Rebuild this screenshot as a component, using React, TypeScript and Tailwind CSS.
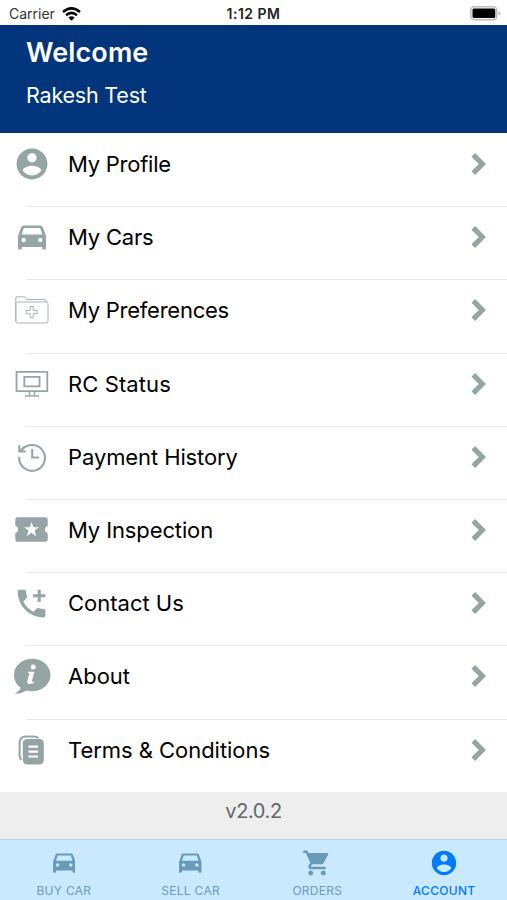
import type { ReactNode } from 'react';
import { IoMdContact } from 'react-icons/io';
import { MdAddIcCall, MdShoppingCart } from 'react-icons/md';

function CarIcon({ width, height }: { width: number; height: number }) {
  return (
    <svg width={width} height={height} viewBox="0 0 28 25" fill="currentColor">
      <path
        fillRule="evenodd"
        d="M5.500.5H22.500Q24.300.5 24.900 2.200L28 11V23.500Q28 24.600 27 24.600H25.400Q24.300 24.600 24.300 23.500V22H3.700V23.500Q3.700 24.600 2.600 24.600H1Q0 24.600 0 23.500V11L3.100 2.200Q3.700.5 5.500.5ZM5.800 3L3.700 9.600H24.300L22.200 3ZM5.700 12.800a2.200 2.200 0 1 0 0 4.400a2.200 2.200 0 0 0 0-4.400ZM22.300 12.800a2.200 2.200 0 1 0 0 4.400a2.200 2.200 0 0 0 0-4.400Z"
      />
    </svg>
  );
}

function HistoryIcon() {
  return (
    <svg width="30" height="30" viewBox="0 0 30 30" fill="none" stroke="#95a5a6" strokeWidth="2">
      <path d="M4.500 8.500A12.900 12.900 0 1 1 2.200 14.800" />
      <path d="M2.300 3.200V9.500H8.800" />
      <path d="M2.600 9.200L7.500 4.800" />
      <path d="M15.200 7V15.600H22" />
    </svg>
  );
}

function TicketIcon() {
  return (
    <svg width="33" height="25" viewBox="0 0 33 25">
      <path
        d="M2.500.3H30.500Q32.700.3 32.700 2.500V9A3.600 3.600 0 0 0 32.700 16V22.500Q32.700 24.700 30.500 24.700H2.500Q.3 24.700.3 22.500V16A3.600 3.600 0 0 0 .3 9V2.500Q.3.3 2.500.3Z"
        fill="#95a5a6"
      />
      <path d="M16.500 5l1.900 5.200h5.600l-4.500 3.400 1.700 5.600-4.700-3.400-4.700 3.400 1.700-5.600-4.500-3.400h5.600z" fill="#fff" />
    </svg>
  );
}

function FolderIcon() {
  return (
    <svg width="34" height="28" viewBox="0 0 34 28" fill="none" stroke="#a9b3b2" strokeWidth="1">
      <path d="M.8 25V2Q.8.8 2 .8H9Q10 .8 10.600 2L11.500 3.500H29Q31 3.500 31 6" />
      <path d="M.8 7Q1 6 2.500 6H31.500Q33 6 33 7.800V25Q33 27 31 27H2.500Q.8 27 .8 25Z" />
      <path d="M15.200 10.500h3v4h4v3.200h-4v4h-3v-4h-4v-3.200h4z" strokeLinejoin="round" />
    </svg>
  );
}

function MonitorIcon() {
  return (
    <svg width="34" height="28" viewBox="0 0 34 28" fill="none" stroke="#95a5a6" strokeWidth="1.800">
      <path d="M1.500 1.900H32.300V21.200H1.500Z" />
      <path d="M9.300 6.800H24.500V16.400H9.300Z" />
      <path d="M14.500 22v3.500M19.500 22v3.500M10 26h14" strokeWidth="1.400" />
    </svg>
  );
}

function InfoBubbleIcon() {
  return (
    <svg width="38" height="36" viewBox="0 0 38 36">
      <path d="M19.200.7C9 .7 1 7.800 1 17c0 5.400 2.500 9.700 6.600 12.800C6.800 32.200 4.800 34 1.500 35.500c4.600.4 8.600-.7 11.800-3.100 1.900.5 3.900.8 5.900.8 10.200 0 18.300-7.100 18.300-16.200S29.400.7 19.200.7z" fill="#95a5a6" />
      <circle cx="20.200" cy="8.900" r="2.500" fill="#fff" />
      <path d="M15.200 13.700h6.200l-2.500 9.300q-.3 1.300 2.300.5l-.3 1.200q-3.200 1.700-5.700 1-1.400-.6-.9-2.700l2-7.300q-.6-1-1.700-.8z" fill="#fff" />
    </svg>
  );
}

function DocumentsIcon() {
  return (
    <svg width="28" height="30" viewBox="0 0 28 30">
      <path d="M3.200 25Q1.600 23 1.600 20V8Q1.600 1.500 8 1.500H15.500Q18.500 1.500 20.500 3" fill="none" stroke="#95a5a6" strokeWidth="2" />
      <rect x="4.800" y="4" width="21" height="25.500" rx="4.500" fill="#95a5a6" />
      <path d="M10.500 11.700h9.500M10.500 16.600h9.500M10.500 21.500h9.500" stroke="#fff" strokeWidth="2.200" />
    </svg>
  );
}

function Chevron() {
  return (
    <svg width="18" height="26" viewBox="0 0 18 26" fill="none" stroke="#95a5a6" strokeWidth="5.200">
      <path d="M3.300 3.900L12.300 13L3.300 22.100" />
    </svg>
  );
}

const rows: { label: string; icon: ReactNode; tracking: string }[] = [
  { label: 'My Profile', icon: <IoMdContact size={38} />, tracking: 'tracking-[-0.25px]' },
  { label: 'My Cars', icon: <CarIcon width={28} height={25} />, tracking: 'tracking-[-0.2px]' },
  { label: 'My Preferences', icon: <FolderIcon />, tracking: 'tracking-[-0.25px]' },
  { label: 'RC Status', icon: <MonitorIcon />, tracking: 'tracking-[0.1px]' },
  { label: 'Payment History', icon: <HistoryIcon />, tracking: 'tracking-[-0.1px]' },
  { label: 'My Inspection', icon: <TicketIcon />, tracking: 'tracking-[-0.12px]' },
  { label: 'Contact Us', icon: <MdAddIcCall size={37} />, tracking: 'tracking-[0px]' },
  { label: 'About', icon: <InfoBubbleIcon />, tracking: 'tracking-[0px]' },
  { label: 'Terms & Conditions', icon: <DocumentsIcon />, tracking: 'tracking-[-0.04px]' },
];

const tabs = [
  { label: 'BUY CAR', icon: <CarIcon width={22.5} height={20} />, active: false },
  { label: 'SELL CAR', icon: <CarIcon width={22.5} height={20} />, active: false },
  { label: 'ORDERS', icon: <MdShoppingCart size={30} />, active: false },
  { label: 'ACCOUNT', icon: <IoMdContact size={30} />, active: true },
];

export default function App() {
  return (
    <div className="flex h-[900px] w-[507px] flex-col overflow-hidden bg-white font-['Inter',sans-serif] text-black">
      <div className="grid h-[25px] shrink-0 grid-cols-3 items-center px-[9px] pt-[2px] text-[14px] leading-none">
        <div className="flex items-center gap-[7px] text-[#333]">
          <span>Carrier</span>
          <svg width="19" height="14" viewBox="0 0 19 14" fill="none" stroke="#000" strokeWidth="2.500">
            <path d="M1 5Q9.500-2.200 18 5M4 8.300Q9.500 3.500 15 8.300" />
            <path d="M6.400 10.600Q9.500 8 12.600 10.600L9.500 13.700Z" fill="#000" stroke="none" />
          </svg>
        </div>
        <span className="text-center font-semibold tracking-[0.5px] text-[#222]">1:12 PM</span>
        <svg className="mr-[-3px] justify-self-end" width="31" height="15" viewBox="0 0 31 15">
          <rect x=".8" y=".8" width="26" height="13" rx="3.500" fill="#fff" stroke="#bbb" strokeWidth="1.500" />
          <rect x="2.500" y="2.600" width="22.800" height="9.400" rx="1.500" fill="#000" />
          <path d="M28.500 5q2 .7 2 2.300t-2 2.300z" fill="#bbb" />
        </svg>
      </div>

      <header className="flex h-[108px] shrink-0 flex-col bg-[#02357c] pl-[26px] text-white">
        <h1 className="mt-[10px] text-[27px] leading-[36px] font-semibold tracking-[0.1px]">Welcome</h1>
        <p className="mt-[10px] text-[21.500px] leading-[28px] tracking-[-0.2px]">Rakesh Test</p>
      </header>

      <ul className="flex shrink-0 flex-col">
        {rows.map((row, i) => (
          <li key={row.label} className="h-[73.2px] shrink-0">
            {i > 0 && <div className="ml-[26px] h-px bg-[#e6e6e6]" />}
            <div className={`flex items-center ${i > 0 ? 'h-[60px]' : 'h-[62px]'}`}>
              <span className="flex w-[63px] shrink-0 justify-center text-[#95a5a6]">{row.icon}</span>
              <span className={`ml-[5px] flex-1 text-[22px] leading-[28px] whitespace-nowrap ${row.tracking}`}>{row.label}</span>
              <span className="mr-[19px]"><Chevron /></span>
            </div>
          </li>
        ))}
      </ul>

      <div className="flex h-[47.2px] shrink-0 justify-center bg-[#eee] pt-[5px] text-[20px] leading-[28px] tracking-[-0.4px] text-[#666]">v2.0.2</div>

      <nav className="grid h-[61px] shrink-0 grid-cols-4 border-t border-[#bcd3e0] bg-[#c9e9ff]">
        {tabs.map((tab) => (
          <div key={tab.label} className={`flex flex-col items-center pt-[8px] pl-[1px] ${tab.active ? 'text-[#007aff]' : 'text-[#6a9ab9]'}`}>
            <span className="flex h-[30px] items-center">{tab.icon}</span>
            <span className={`mt-[5px] text-[12px] leading-[16px] tracking-[0.3px] ${tab.active ? 'font-medium' : ''}`}>{tab.label}</span>
          </div>
        ))}
      </nav>
    </div>
  );
}
